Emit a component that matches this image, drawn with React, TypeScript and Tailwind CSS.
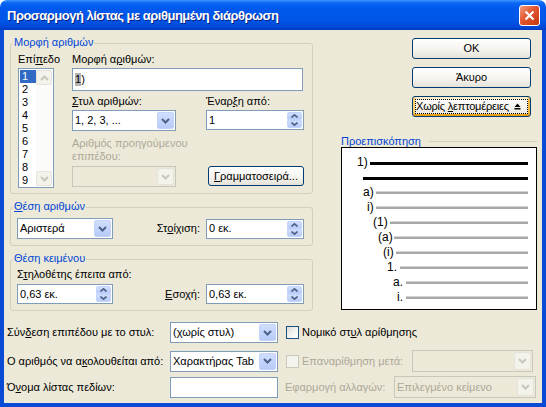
import React from "react";

function U({ children }: { children: React.ReactNode }) {
  return <span className="underline decoration-1 underline-offset-[1px]">{children}</span>;
}

function Chevron({ disabled, up }: { disabled?: boolean; up?: boolean }) {
  return (
    <svg width="9" height="6" viewBox="0 0 9 6">
      <polyline
        points={up ? "1,5 4.5,1.5 8,5" : "1,1 4.5,4.5 8,1"}
        fill="none"
        stroke={disabled ? "#C9C7BA" : "#4D6185"}
        strokeWidth="2"
      />
    </svg>
  );
}

function SmallArrow({ up }: { up?: boolean }) {
  return (
    <svg width="7" height="4" viewBox="0 0 7 4">
      <polyline
        points={up ? "0.5,3.5 3.5,0.8 6.5,3.5" : "0.5,0.5 3.5,3.2 6.5,0.5"}
        fill="none"
        stroke="#4D6185"
        strokeWidth="1.6"
      />
    </svg>
  );
}

function DropBtn({ disabled }: { disabled?: boolean }) {
  return (
    <div
      className={`flex w-[17px] items-center justify-center rounded-[2px] border ${
        disabled
          ? "border-[#E6E4DA] bg-[#F3F2EB]"
          : "border-[#C3D3FB] bg-[linear-gradient(180deg,#D0DEFE,#B7CBF8)]"
      }`}
    >
      <Chevron disabled={disabled} />
    </div>
  );
}

function Combo({
  className,
  value,
  disabled,
}: {
  className: string;
  value?: string;
  disabled?: boolean;
}) {
  return (
    <div
      className={`flex shrink-0 border p-[1px] ${
        disabled ? "border-[#C9C7BA] bg-[#ECE9D8] text-[#ACA899]" : "border-[#7F9DB9] bg-white"
      } ${className}`}
    >
      <div className="flex flex-1 items-center overflow-hidden whitespace-nowrap pl-[1px]">{value}</div>
      <DropBtn disabled={disabled} />
    </div>
  );
}

function Spin({ className, value }: { className: string; value: string }) {
  return (
    <div className={`flex shrink-0 border border-[#7F9DB9] bg-white p-[1px] ${className}`}>
      <div className="flex flex-1 items-center pl-[1px]">{value}</div>
      <div className="flex w-[15px] flex-col">
        <div className="flex flex-1 items-center justify-center rounded-t-[2px] border border-[#C3D3FB] bg-[linear-gradient(180deg,#D0DEFE,#B7CBF8)]">
          <SmallArrow up />
        </div>
        <div className="flex flex-1 items-center justify-center rounded-b-[2px] border border-[#C3D3FB] bg-[linear-gradient(180deg,#D0DEFE,#B7CBF8)]">
          <SmallArrow />
        </div>
      </div>
    </div>
  );
}

function XPButton({ className, children }: { className: string; children: React.ReactNode }) {
  return (
    <div
      className={`flex items-center justify-center whitespace-nowrap rounded-[3px] border border-[#003C74] bg-[linear-gradient(180deg,#FFFFFF,#F5F4EF_55%,#E4E2D8)] ${className}`}
    >
      {children}
    </div>
  );
}

function Check({ disabled }: { disabled?: boolean }) {
  return (
    <div
      className={`ml-[8px] h-[13px] w-[13px] shrink-0 border ${
        disabled
          ? "border-[#CAC8BB] bg-[#F4F3EE]"
          : "border-[#1C5180] bg-[linear-gradient(135deg,#DCDBD5,#F6F6F4_60%,#FFFFFF)]"
      }`}
    />
  );
}

function GroupBox({
  title,
  className,
  children,
}: {
  title: React.ReactNode;
  className: string;
  children: React.ReactNode;
}) {
  return (
    <div className={`relative w-[303px] rounded-[3px] border border-[#D0D0BF] ${className}`}>
      <span className="absolute -top-[8px] left-[2px] whitespace-nowrap bg-[#ECE9D8] px-[1px] leading-[13px] text-[#0046D5]">
        {title}
      </span>
      {children}
    </div>
  );
}

function Preview() {
  const rows = [
    { label: "a)", lx: 21, x: 34 },
    { label: "i)", lx: 25, x: 34 },
    { label: "(1)", lx: 31, x: 48 },
    { label: "(a)", lx: 36, x: 52 },
    { label: "(i)", lx: 41, x: 54 },
    { label: "1.", lx: 45, x: 58 },
    { label: "a.", lx: 51, x: 64 },
    { label: "i.", lx: 55, x: 64 },
  ];
  return (
    <div className="h-[163px] w-[196px] border border-black bg-white">
      <svg width="194" height="161" viewBox="0 0 194 161" fontFamily="'Liberation Sans', Arial, sans-serif" fontSize="12">
        <text x="15" y="18" fill="#000">1)</text>
        <rect x="28" y="14" width="158" height="3" fill="#000" />
        <rect x="21" y="29" width="165" height="3" fill="#000" />
        {rows.map((r, i) => (
          <g key={i}>
            <text x={r.lx} y={48 + i * 15} fill="#000">
              {r.label}
            </text>
            <rect x={r.x} y={43.5 + i * 15} width={186 - r.x} height="2.5" fill="#A8A8A8" />
          </g>
        ))}
      </svg>
    </div>
  );
}

export default function App() {
  const levels = [1, 2, 3, 4, 5, 6, 7, 8, 9];
  return (
    <div className="flex h-[407px] w-[546px] flex-col overflow-hidden whitespace-nowrap font-['Liberation_Sans',Arial,sans-serif] text-[11px] leading-[13px] text-black">
      {/* title bar */}
      <div className="flex h-[30px] shrink-0 items-center justify-between rounded-t-[7px] bg-[linear-gradient(180deg,#3D95FF_0px,#0A66F5_3px,#0058EE_8px,#0057E8_20px,#0047D8_27px,#003BC0_30px)] pl-[7px] pr-[6px]">
        <span className="text-[13px] font-bold tracking-[-0.5px] text-white [text-shadow:1px_1px_#0A1E80]">
          Προσαρμογή λίστας με αριθμημένη διάρθρωση
        </span>
        <div className="flex h-[21px] w-[21px] items-center justify-center rounded-[3px] border border-white bg-[linear-gradient(135deg,#F29B7E,#E0552F_45%,#C8380F)]">
          <svg width="11" height="11" viewBox="0 0 11 11">
            <path d="M1.5 1.5 L9.5 9.5 M9.5 1.5 L1.5 9.5" stroke="#fff" strokeWidth="2.2" />
          </svg>
        </div>
      </div>

      {/* client area */}
      <div className="flex flex-1 flex-col border-x-4 border-b-4 border-[#0A4BD6] bg-[#ECE9D8]">
        <div className="flex">
          {/* left column */}
          <div className="ml-[6px] flex flex-col">
            <GroupBox title="Μορφή αριθμών" className="mt-[13px] h-[151px]">
              <div className="flex pl-[7px] pt-[9px]">
                <div className="flex w-[36px] flex-col">
                  <span>
                    Επί<U>π</U>εδο
                  </span>
                  <div className="mt-[2px] flex h-[120px] w-[36px] border border-[#7F9DB9] bg-white p-[1px]">
                    <div className="flex w-[16px] flex-col">
                      {levels.map((l) => (
                        <div
                          key={l}
                          className={`flex h-[13px] items-center pl-[2px] ${
                            l === 1 ? "bg-[#316AC5] text-white" : ""
                          }`}
                        >
                          {l}
                        </div>
                      ))}
                    </div>
                    <div className="flex w-[16px] flex-col justify-between bg-[#FBFBF9]">
                      <div className="flex h-[15px] items-center justify-center rounded-[2px] border border-[#E6E4DA] bg-[#F3F2EB]">
                        <Chevron disabled up />
                      </div>
                      <div className="flex h-[15px] items-center justify-center rounded-[2px] border border-[#E6E4DA] bg-[#F3F2EB]">
                        <Chevron disabled />
                      </div>
                    </div>
                  </div>
                </div>

                <div className="ml-[18px] flex flex-col">
                  <span>
                    Μορφή α<U>ρ</U>ιθμών:
                  </span>
                  <div className="mt-[2px] flex h-[23px] w-[231px] items-center border border-[#7F9DB9] bg-white pl-[2px]">
                    <span className="bg-[#B4B4B4]">1</span>
                    <span>)</span>
                  </div>
                  <div className="flex">
                    <div className="flex w-[104px] flex-col">
                      <span className="mt-[4px]">
                        <U>Σ</U>τυλ αριθμών:
                      </span>
                      <Combo className="mt-[2px] h-[21px] w-[104px]" value="1, 2, 3, ..." />
                      <span className="mt-[6px] text-[#ACA899]">
                        Αριθμός προηγούμενου
                        <br />
                        επιπέδου:
                      </span>
                      <Combo className="mt-[3px] h-[21px] w-[104px]" disabled />
                    </div>
                    <div className="ml-[30px] flex flex-col">
                      <span className="mt-[4px]">
                        Έναρ<U>ξ</U>η από:
                      </span>
                      <Spin className="mt-[2px] h-[20px] w-[98px]" value="1" />
                      <XPButton className="ml-[2px] mt-[36px] h-[20px] w-[96px]">
                        <span>
                          <U>Γ</U>ραμματοσειρά...
                        </span>
                      </XPButton>
                    </div>
                  </div>
                </div>
              </div>
            </GroupBox>

            <GroupBox
              title={
                <>
                  <U>Θ</U>έση αριθμών
                </>
              }
              className="mt-[13px] h-[39px]"
            >
              <div className="flex items-center pl-[6px] pr-[8px] pt-[10px]">
                <Combo className="h-[21px] w-[96px]" value="Αριστερά" />
                <span className="ml-auto">
                  Στ<U>ο</U>ίχιση:
                </span>
                <Spin className="ml-[6px] h-[20px] w-[98px]" value="0 εκ." />
              </div>
            </GroupBox>

            <GroupBox title="Θέση κειμένου" className="mt-[13px] h-[52px]">
              <div className="flex flex-col pl-[6px] pr-[8px] pt-[8px]">
                <span>
                  Σ<U>τ</U>ηλοθέτης έπειτα από:
                </span>
                <div className="mt-[3px] flex items-center">
                  <Spin className="h-[20px] w-[96px]" value="0,63 εκ." />
                  <span className="ml-auto">
                    <U>Ε</U>σοχή:
                  </span>
                  <Spin className="ml-[6px] h-[20px] w-[98px]" value="0,63 εκ." />
                </div>
              </div>
            </GroupBox>
          </div>

          {/* right column */}
          <div className="ml-[28px] flex w-[196px] flex-col">
            <XPButton className="ml-[71px] mt-[8px] h-[21px] w-[119px]">OK</XPButton>
            <XPButton className="ml-[71px] mt-[8px] h-[21px] w-[119px]">Άκυρο</XPButton>
            <div className="ml-[71px] mt-[8px] flex h-[21px] w-[119px] rounded-[3px] border border-[#003C74] bg-[linear-gradient(180deg,#FFFFFF,#F5F4EF_55%,#E4E2D8)] p-[1px] shadow-[inset_0_-2px_0_#E5A01A,inset_2px_0_0_#F8CF6C,inset_-2px_0_0_#F3B947,inset_0_2px_0_#FFEFC8]">
              <div className="m-[1px] flex flex-1 items-center justify-between border border-dotted border-black pr-[6px]">
                <span className="tracking-[-0.2px]">
                  Χωρίς <U>λ</U>επτομέρειες
                </span>
                <svg width="7" height="7" viewBox="0 0 7 7">
                  <path d="M3.5 0.5 L6.5 4 L0.5 4 Z" fill="#000" />
                  <rect x="0.5" y="5" width="6" height="1.5" fill="#000" />
                </svg>
              </div>
            </div>
            <div className="mt-[18px] flex h-[12px] items-center leading-[12px]">
              <span className="text-[#0046D5]">Προεπισκόπηση</span>
              <div className="ml-[8px] h-px flex-1 bg-[#D0D0BF]" />
            </div>
            <Preview />
          </div>
        </div>

        {/* bottom rows */}
        <div className="mt-[11px] flex items-center pl-[3px]">
          <span className="w-[163px] shrink-0">
            Σύν<U>δ</U>εση επιπέδου με το στυλ:
          </span>
          <Combo className="h-[21px] w-[108px]" value="(χωρίς στυλ)" />
          <Check />
          <span className="ml-[3px]">
            Νομικό στ<U>υ</U>λ αρίθμησης
          </span>
        </div>
        <div className="mt-[7px] flex items-center pl-[3px]">
          <span className="w-[163px] shrink-0">
            Ο αριθμός να α<U>κ</U>ολουθείται από:
          </span>
          <Combo className="h-[21px] w-[108px]" value="Χαρακτήρας Tab" />
          <Check disabled />
          <span className="ml-[3px] text-[#ACA899]">Επαναρίθμηση μετά:</span>
          <Combo className="ml-auto mr-[9px] h-[22px] w-[121px]" disabled />
        </div>
        <div className="mt-[4px] flex items-center pl-[3px]">
          <span className="w-[163px] shrink-0">
            Ό<U>ν</U>ομα λίστας πεδίων:
          </span>
          <div className="h-[21px] w-[108px] shrink-0 border border-[#7F9DB9] bg-white" />
          <span className="ml-[7px] text-[#ACA899]">Εφαρμογή αλλαγών:</span>
          <Combo className="ml-auto mr-[6px] h-[22px] w-[142px]" value="Επιλεγμένο κείμενο" disabled />
        </div>
      </div>
    </div>
  );
}
